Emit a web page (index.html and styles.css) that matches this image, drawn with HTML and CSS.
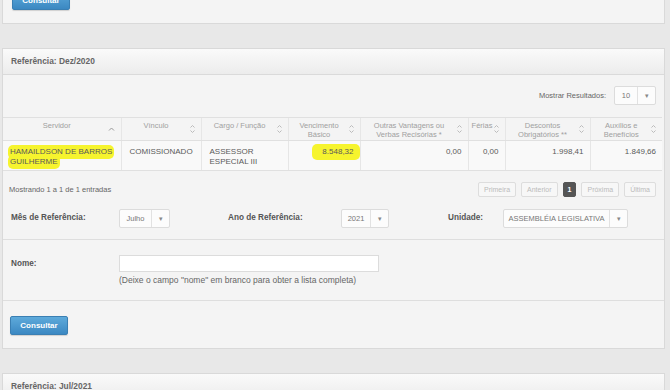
FILE: index.html
```html
<!DOCTYPE html>
<html lang="pt-BR">
<head>
    <meta charset="UTF-8">
    <title>Consulta de Remuneração</title>
    <link rel="stylesheet" href="styles.css">
</head>
<body>
<div class="page">

    <!-- formulário anterior (rolado) -->
    <div class="panel panel-top">
        <div class="actions">
            <button class="btn">Consultar</button>
        </div>
    </div>

    <!-- resultado Dez/2020 -->
    <div class="panel">
        <div class="panel-heading">Referência: Dez/2020</div>

        <div class="results">
            <div class="length">
                <span>Mostrar Resultados:</span>
                <span class="select select-len"><span class="value">10</span><span class="caret">&#9662;</span></span>
            </div>

            <table class="grid">
                <colgroup>
                    <col style="width:118px">
                    <col style="width:80px">
                    <col style="width:87px">
                    <col style="width:72px">
                    <col style="width:108px">
                    <col style="width:37px">
                    <col style="width:85px">
                    <col style="width:72px">
                </colgroup>
                <thead>
                    <tr>
                        <th class="sorted">Servidor
                            <svg class="sort" width="7" height="10" viewBox="0 0 7 10"><path d="M1 6.5 L3.5 4 L6 6.5" /></svg>
                        </th>
                        <th>Vínculo
                            <svg class="sort" width="7" height="10" viewBox="0 0 7 10"><path d="M1.5 3.5 L3.5 1.5 L5.5 3.5 M1.5 6.5 L3.5 8.5 L5.5 6.5" /></svg>
                        </th>
                        <th>Cargo / Função
                            <svg class="sort" width="7" height="10" viewBox="0 0 7 10"><path d="M1.5 3.5 L3.5 1.5 L5.5 3.5 M1.5 6.5 L3.5 8.5 L5.5 6.5" /></svg>
                        </th>
                        <th>Vencimento<br>Básico
                            <svg class="sort" width="7" height="10" viewBox="0 0 7 10"><path d="M1.5 3.5 L3.5 1.5 L5.5 3.5 M1.5 6.5 L3.5 8.5 L5.5 6.5" /></svg>
                        </th>
                        <th>Outras Vantagens ou<br>Verbas Recisórias *
                            <svg class="sort" width="7" height="10" viewBox="0 0 7 10"><path d="M1.5 3.5 L3.5 1.5 L5.5 3.5 M1.5 6.5 L3.5 8.5 L5.5 6.5" /></svg>
                        </th>
                        <th class="narrow">Férias
                            <svg class="sort" width="7" height="10" viewBox="0 0 7 10"><path d="M1.5 3.5 L3.5 1.5 L5.5 3.5 M1.5 6.5 L3.5 8.5 L5.5 6.5" /></svg>
                        </th>
                        <th>Descontos<br>Obrigatórios **
                            <svg class="sort" width="7" height="10" viewBox="0 0 7 10"><path d="M1.5 3.5 L3.5 1.5 L5.5 3.5 M1.5 6.5 L3.5 8.5 L5.5 6.5" /></svg>
                        </th>
                        <th>Auxílios e<br>Benefícios
                            <svg class="sort" width="7" height="10" viewBox="0 0 7 10"><path d="M1.5 3.5 L3.5 1.5 L5.5 3.5 M1.5 6.5 L3.5 8.5 L5.5 6.5" /></svg>
                        </th>
                    </tr>
                </thead>
                <tbody>
                    <tr>
                        <td class="name"><span class="hl">HAMAILDSON DE BARROS GUILHERME</span></td>
                        <td>COMISSIONADO</td>
                        <td>ASSESSOR ESPECIAL III</td>
                        <td class="num"><span class="hl hl-num">8.548,32</span></td>
                        <td class="num">0,00</td>
                        <td class="num">0,00</td>
                        <td class="num">1.998,41</td>
                        <td class="num">1.849,66</td>
                    </tr>
                </tbody>
            </table>

            <div class="table-footer">
                <span>Mostrando 1 a 1 de 1 entradas</span>
                <div class="pager">
                    <span class="page-btn">Primeira</span>
                    <span class="page-btn">Anterior</span>
                    <span class="page-btn active">1</span>
                    <span class="page-btn">Próxima</span>
                    <span class="page-btn">Última</span>
                </div>
            </div>
        </div>

        <!-- filtros -->
        <div class="form-row filters">
            <label>Mês de Referência:</label>
            <span class="select select-mes"><span class="value">Julho</span><span class="caret">&#9662;</span></span>
            <label>Ano de Referência:</label>
            <span class="select select-ano"><span class="value">2021</span><span class="caret">&#9662;</span></span>
            <label>Unidade:</label>
            <span class="select select-uni"><span class="value">ASSEMBLÉIA LEGISLATIVA</span><span class="caret">&#9662;</span></span>
        </div>

        <div class="form-row name-row">
            <label>Nome:</label>
            <div>
                <input type="text" class="input">
                <p class="hint">(Deixe o campo "nome" em branco para obter a lista completa)</p>
            </div>
        </div>

        <div class="actions">
            <button class="btn">Consultar</button>
        </div>
    </div>

    <!-- resultado Jul/2021 -->
    <div class="panel">
        <div class="panel-heading">Referência: Jul/2021</div>
        <div class="results empty"></div>
    </div>

</div>
</body>
</html>
```
FILE: styles.css
```css
body {
    margin: 0;
    background-color: #e8e8e8;
    font-family: "Liberation Sans", Arial, sans-serif;
    font-size: 8px;
    color: #555;
    overflow: hidden;
}

.page {
    padding: 0 5px 0 2px;
}

/* painéis */
.panel {
    background-color: #f4f4f4;
    border: 1px solid #d9d9d9;
    margin-bottom: 24px;
}

.panel-top {
    margin-top: -22px;
}

.panel-heading {
    height: 25px;
    line-height: 25px;
    padding: 0 8px;
    border-bottom: 1px solid #dadada;
    background: linear-gradient(#fafafa, #ececec);
    font-weight: bold;
    font-size: 8.4px;
    color: #666;
}

/* botão */
.actions {
    padding: 15px 9px 13px 7px;
}

.panel-top .actions {
    padding: 12px 9px 13px;
}

.btn {
    display: block;
    width: 58px;
    height: 19px;
    padding: 0;
    border: 1px solid #3a7fb3;
    border-radius: 2px;
    background: linear-gradient(#5eaadb, #3b88c2);
    color: white;
    font-family: "Liberation Sans", Arial, sans-serif;
    font-weight: bold;
    font-size: 8px;
    box-shadow: 0 1px 1px rgba(0, 0, 0, 0.15);
}

/* selects */
.select {
    display: flex;
    align-items: stretch;
    height: 19px;
    box-sizing: border-box;
    border: 1px solid #dcdcdc;
    border-radius: 2px;
    background-color: #fcfcfc;
    color: #777;
    font-size: 7.5px;
}

.select .value {
    flex: 1;
    display: flex;
    align-items: center;
    justify-content: center;
    padding: 0 4px;
}

.select .caret {
    width: 17px;
    border-left: 1px solid #e2e2e2;
    display: flex;
    align-items: center;
    justify-content: center;
    font-size: 7px;
    color: #888;
}

.select-len { width: 42px; }
.select-mes { width: 51px; }
.select-ano { width: 48px; }
.select-uni { width: 125px; }

/* resultados */
.results {
    padding-top: 11px;
}

.results.empty {
    height: 40px;
}

.length {
    display: flex;
    justify-content: flex-end;
    align-items: center;
    gap: 8px;
    padding-right: 8px;
    color: #666;
    font-size: 7.5px;
}

.grid {
    width: 659px;
    margin-top: 12px;
    border-collapse: collapse;
    table-layout: fixed;
}

.grid th {
    position: relative;
    height: 23px;
    box-sizing: border-box;
    padding: 4px 14px 0 4px;
    vertical-align: top;
    border-top: 1px solid #e0e0e0;
    border-bottom: 1px solid #e0e0e0;
    border-left: 1px solid #e6e6e6;
    font-weight: normal;
    font-size: 7.5px;
    line-height: 8.5px;
    color: #a0a0a0;
    text-align: center;
}

.grid th:first-child {
    border-left: none;
}

.grid th.narrow {
    padding: 4px 9px 0 0;
}

.sort {
    position: absolute;
    right: 5px;
    top: 6px;
    fill: none;
    stroke: #bbb;
    stroke-width: 1;
}

.grid th.sorted .sort {
    right: 6px;
    stroke: #999;
}

.grid td {
    height: 30px;
    box-sizing: border-box;
    padding: 6px 6px 0 8px;
    vertical-align: top;
    border-left: 1px solid #e6e6e6;
    border-bottom: 1px solid #e0e0e0;
    background-color: #f9f9f9;
    font-size: 8px;
    line-height: 10px;
    color: #5a5a5a;
}

.grid td:first-child {
    border-left: none;
}

.grid td.name {
    padding-left: 5px;
    padding-right: 4px;
}

.grid td.num {
    text-align: right;
}

/* marca-texto */
.hl {
    background-color: #f6f42e;
    padding: 2px 2px 3px;
    border-radius: 5px;
    -webkit-box-decoration-break: clone;
    box-decoration-break: clone;
}

.hl-num {
    padding: 3px 6px 4px 10px;
    margin-right: -6px;
}

.table-footer {
    display: flex;
    justify-content: space-between;
    align-items: center;
    padding: 11px 8px 4px 6px;
    font-size: 7.5px;
    color: #666;
}

.pager {
    display: flex;
    gap: 5px;
}

.page-btn {
    height: 15px;
    line-height: 13px;
    box-sizing: border-box;
    padding: 0 5px;
    border: 1px solid #ddd;
    border-radius: 2px;
    background-color: #f7f7f7;
    font-size: 7px;
    color: #bbb;
}

.page-btn.active {
    padding: 0 4px;
    background-color: #555;
    border-color: #555;
    color: white;
    font-weight: bold;
}

/* formulário */
.form-row {
    display: grid;
    align-items: center;
    padding: 0 8px;
    border-bottom: 1px solid #dedede;
}

.form-row label {
    font-weight: bold;
    font-size: 8.2px;
    color: #555;
}

.filters {
    grid-template-columns: 108px 109px 113px 107px 55px 125px;
    height: 39px;
    box-sizing: border-box;
    padding-top: 1px;
    padding-bottom: 4px;
}

.filters label {
    margin-bottom: 3px;
}

.name-row {
    grid-template-columns: 108px 260px;
    align-items: start;
    height: 61px;
    box-sizing: border-box;
    padding-top: 15px;
}

.name-row label {
    margin-top: 4px;
}

.input {
    display: block;
    width: 260px;
    height: 17px;
    box-sizing: border-box;
    margin: 0;
    border: 1px solid #dcdcdc;
    background-color: white;
}

.hint {
    margin: 3px 0 0;
    font-size: 8.5px;
    color: #666;
    white-space: nowrap;
}
```
